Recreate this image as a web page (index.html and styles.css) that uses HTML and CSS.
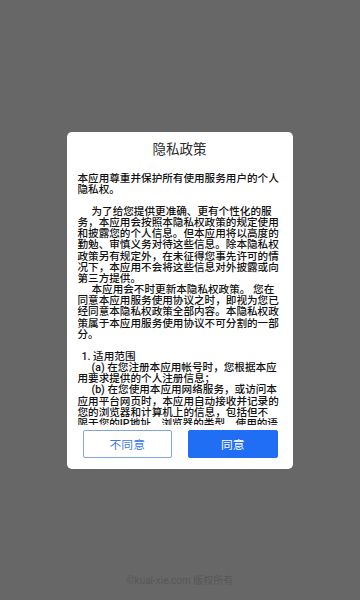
FILE: index.html
```html
<!DOCTYPE html>
<html lang="zh-CN">
<head>
<meta charset="utf-8">
<meta name="viewport" content="width=360, initial-scale=1">
<title>隐私政策</title>
<link rel="stylesheet" href="styles.css">
</head>
<body>
<div class="screen">
  <div class="dialog">
    <div class="dialog-title">隐私政策</div>
    <div class="dialog-content">
      <p class="para">本应用尊重并保护所有使用服务用户的个人<br>隐私权。</p>
      <p class="blank">&nbsp;</p>
      <p class="para indent">为了给您提供更准确、更有个性化的服<br>务，本应用会按照本隐私权政策的规定使用<br>和披露您的个人信息。但本应用将以高度的<br>勤勉、审慎义务对待这些信息。除本隐私权<br>政策另有规定外，在未征得您事先许可的情<br>况下，本应用不会将这些信息对外披露或向<br>第三方提供。</p>
      <p class="para indent">本应用会不时更新本隐私权政策。 您在<br>同意本应用服务使用协议之时，即视为您已<br>经同意本隐私权政策全部内容。本隐私权政<br>策属于本应用服务使用协议不可分割的一部<br>分。</p>
      <p class="blank">&nbsp;</p>
      <p class="para small-indent">1. 适用范围</p>
      <p class="para indent">(a) 在您注册本应用帐号时，您根据本应<br>用要求提供的个人注册信息；</p>
      <p class="para indent">(b) 在您使用本应用网络服务，或访问本<br>应用平台网页时，本应用自动接收并记录的<br>您的浏览器和计算机上的信息，包括但不<br>限于您的IP地址、浏览器的类型、使用的语<br>言、访问日期和时间、软硬件特征信息及您<br>需求的网页记录等数据；</p>
    </div>
    <div class="dialog-actions">
      <button class="btn btn-outline" type="button">不同意</button>
      <button class="btn btn-primary" type="button">同意</button>
    </div>
  </div>
  <div class="watermark">©kuai-xie.com 版权所有</div>
</div>
</body>
</html>
```
FILE: styles.css
```css
* {
  box-sizing: border-box;
}

html, body {
  margin: 0;
  padding: 0;
}

body {
  font-family: Roboto, "Noto Sans CJK SC", sans-serif;
  background: #676767;
}

.screen {
  position: relative;
  width: 360px;
  height: 600px;
  display: flex;
  align-items: center;
  justify-content: center;
  background: #676767;
}

.dialog {
  width: 226px;
  background: #ffffff;
  border-radius: 5px;
  padding: 7px 0 11px;
  display: flex;
  flex-direction: column;
  margin-left: -1px;
}

.dialog-title {
  font-size: 13.5px;
  line-height: 20px;
  height: 20px;
  text-align: center;
  color: #2a2a2a;
}

.dialog-content {
  margin-top: 14px;
  height: 252px;
  overflow: hidden;
  padding: 0 8px 0 11px;
  font-size: 10.6px;
  line-height: 11.15px;
  font-weight: 500;
  color: #111111;
  white-space: nowrap;
  text-spacing-trim: space-all;
}

.para,
.blank {
  margin: 0;
}

.indent {
  text-indent: 14px;
}

.small-indent {
  text-indent: 4px;
}

.dialog-actions {
  margin-top: 5px;
  display: flex;
  gap: 16px;
  padding: 0 15px 0 16px;
}

.btn {
  flex: 1;
  height: 28px;
  margin: 0;
  padding: 0;
  font-family: Roboto, "Noto Sans CJK SC", sans-serif;
  font-size: 11.8px;
  border-radius: 2px;
  cursor: pointer;
}

.btn-outline {
  background: #ffffff;
  border: 1px solid #7ea5e8;
  color: #3d7ae3;
}

.btn-primary {
  background: #1f6ef4;
  border: 1px solid #1f6ef4;
  color: #ffffff;
}

.watermark {
  position: absolute;
  left: 0;
  right: 0;
  bottom: 13px;
  text-align: center;
  font-size: 10px;
  line-height: 12px;
  color: #575757;
}
```
